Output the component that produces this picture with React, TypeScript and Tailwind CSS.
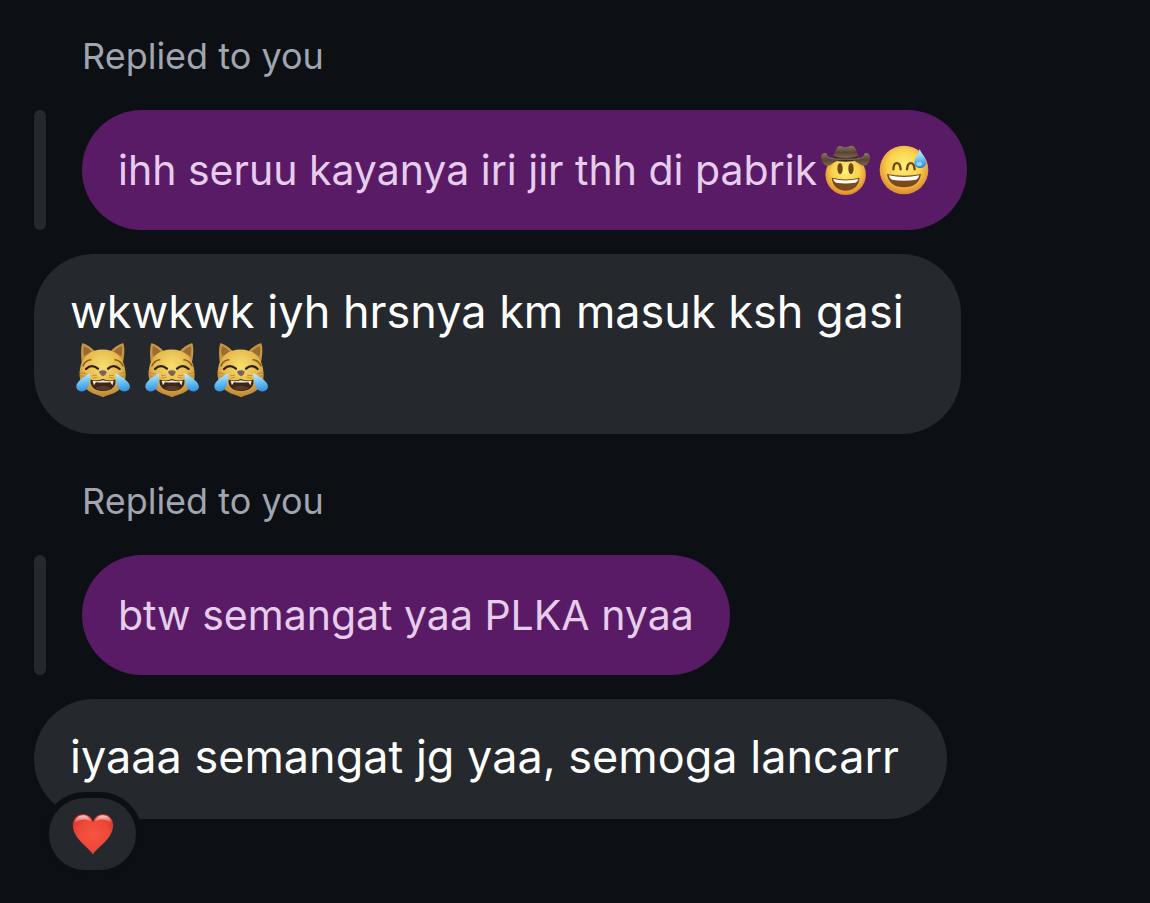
import React from 'react';

const CatJoyEmoji: React.FC = () => (
  <svg role="img" aria-label="cat with tears of joy" viewBox="0 0 166 170" className="h-[56px] w-[55px]">
    <defs>
      <radialGradient id="cat-face" cx="50%" cy="35%" r="65%">
        <stop offset="0" stopColor="#f8de70" />
        <stop offset="0.6" stopColor="#e6b94d" />
        <stop offset="1" stopColor="#b98034" />
      </radialGradient>
      <linearGradient id="cat-tear" x1="0.4" y1="0" x2="0.5" y2="1">
        <stop offset="0" stopColor="#c9efff" />
        <stop offset="0.5" stopColor="#6cc1f5" />
        <stop offset="1" stopColor="#2f8fe0" />
      </linearGradient>
    </defs>
    <path d="M17 62 C14 38 14 16 19 3 C34 8 48 18 58 30 Z" fill="#c8963f" />
    <path d="M142 62 C147 38 148 16 143 3 C127 8 113 18 103 30 Z" fill="#c8963f" />
    <path d="M24 44 C21 30 21 20 24 12 C34 17 41 22 47 29 Z" fill="#9c6a33" />
    <path d="M137 44 C140 30 141 20 138 12 C128 17 120 22 114 29 Z" fill="#9c6a33" />
    <path d="M80 23 C117 23 143 45 148 80 C153 108 150 133 126 149 C109 160 96 161 82 168 C67 161 54 160 38 149 C14 133 7 108 12 80 C18 44 44 23 80 23 Z" fill="url(#cat-face)" />
    <g fill="none" strokeLinecap="round">
      <path d="M21 72 Q28 56 44 54" stroke="#8a5a25" strokeWidth="5" />
      <path d="M142 72 Q134 56 118 54" stroke="#8a5a25" strokeWidth="5" />
      <path d="M30 82 Q47 65 66 81" stroke="#2b2019" strokeWidth="7" />
      <path d="M97 81 Q114 65 132 82" stroke="#2b2019" strokeWidth="7" />
      <path d="M9 92 L31 97 M10 103 L30 104 M150 92 L131 97 M150 103 L132 104 M50 102 L62 101 M51 110 L63 107 M101 101 L113 102 M100 107 L113 110" stroke="#a97431" strokeWidth="2" />
    </g>
    <path d="M70 89 Q81 82 92 89 Q94 98 82 104 Q69 98 70 89 Z" fill="#7c6258" />
    <path d="M44 114 Q61 120 81 112 Q101 120 119 114 C122 133 111 149 82 149 C52 149 41 132 44 114 Z" fill="#3a261b" />
    <path d="M50 118 Q66 121 81 116 Q98 121 114 118 L110 131 L104 122 Q82 124 60 122 L54 131 Z" fill="#f5eed8" />
    <path d="M58 140 Q81 125 106 140 Q98 147 82 147 Q66 147 58 140 Z" fill="#57382a" />
    <path d="M43 94 C42 111 41 131 32 143 C24 154 5 153 1 139 C-3 122 19 109 43 94 Z" fill="url(#cat-tear)" />
    <path d="M119 94 C120 111 121 131 131 143 C139 154 158 153 163 139 C166 122 143 109 119 94 Z" fill="url(#cat-tear)" />
  </svg>
);

const CowboyEmoji: React.FC = () => (
  <svg role="img" aria-label="cowboy" viewBox="0 0 150 154" className="h-[51px] w-[50px]">
    <defs>
      <radialGradient id="cowboy-face" cx="50%" cy="42%" r="58%">
        <stop offset="0" stopColor="#fff07a" />
        <stop offset="0.6" stopColor="#f8cf4a" />
        <stop offset="1" stopColor="#dd8630" />
      </radialGradient>
      <linearGradient id="cowboy-hat" x1="0" y1="0" x2="0" y2="1">
        <stop offset="0" stopColor="#8a7461" />
        <stop offset="0.55" stopColor="#594535" />
        <stop offset="1" stopColor="#80684f" />
      </linearGradient>
    </defs>
    <circle cx="74" cy="90" r="61" fill="url(#cowboy-face)" />
    <ellipse cx="57" cy="71" rx="8" ry="17" fill="#714615" />
    <ellipse cx="90" cy="71" rx="8" ry="17" fill="#714615" />
    <path d="M32 99 Q74 109 116 99 C114 125 97 138 74 138 C51 138 34 125 32 99 Z" fill="#7c4919" />
    <path d="M36 103 Q74 112 112 103 C110 110 107 113 103 114 Q74 119 45 114 Q38 112 36 103 Z" fill="#fff" />
    <path d="M35 39 C42 20 47 4 55 3 C63 2 67 8 74 7 C81 8 86 1 95 3 C105 6 108 23 114 39 Z" fill="url(#cowboy-hat)" />
    <path d="M38 33 Q74 45 111 33 L114 46 Q74 55 34 46 Z" fill="#3c2c24" />
    <path d="M15 25 C5 21 -3 31 1 44 C5 60 18 68 31 59 C46 47 57 44 74 44 C92 44 103 48 118 59 C131 68 144 59 147 44 C150 31 142 21 132 25 C134 43 111 43 74 43 C36 43 14 42 15 25 Z" fill="url(#cowboy-hat)" />
    <path d="M15 25 C15 42 40 43 74 43 C109 43 132 42 132 25" fill="none" stroke="#a18c75" strokeWidth="2" />
  </svg>
);

const SweatSmileEmoji: React.FC = () => (
  <svg role="img" aria-label="grinning with sweat" viewBox="0 0 150 150" className="h-[50px] w-[50px]">
    <defs>
      <radialGradient id="sweat-face" cx="50%" cy="42%" r="58%">
        <stop offset="0" stopColor="#fff07a" />
        <stop offset="0.6" stopColor="#f8cf4a" />
        <stop offset="1" stopColor="#dd8630" />
      </radialGradient>
      <linearGradient id="sweat-drop" x1="0.4" y1="0" x2="0.5" y2="1">
        <stop offset="0" stopColor="#d7f4ff" />
        <stop offset="0.55" stopColor="#6cc1f5" />
        <stop offset="1" stopColor="#2384cf" />
      </linearGradient>
    </defs>
    <circle cx="75" cy="75" r="73" fill="url(#sweat-face)" />
    <path d="M43 73 C44 48 63 48 65 73 M84 73 C86 48 105 48 107 73" fill="none" stroke="#714615" strokeWidth="7" strokeLinecap="round" />
    <path d="M24 87 Q75 98 126 87 C123 113 103 127 75 127 C47 127 27 113 24 87 Z" fill="#7c4919" />
    <path d="M29 91 Q75 101 121 91 C119 99 115 103 111 104 Q75 110 39 104 Q31 100 29 91 Z" fill="#fff" />
    <path d="M122 12 C128 28 142 39 141 53 C140 64 133 69 123 69 C112 69 105 62 106 51 C107 38 119 28 122 12 Z" fill="url(#sweat-drop)" />
    <ellipse cx="121" cy="57" rx="9" ry="6" fill="#b9e8fc" opacity="0.7" />
  </svg>
);

const HeartEmoji: React.FC = () => (
  <svg role="img" aria-label="red heart" viewBox="0 0 126 124" className="h-[41px] w-[42px]">
    <defs>
      <radialGradient id="heart-fill" cx="50%" cy="50%" r="60%">
        <stop offset="0" stopColor="#f75543" />
        <stop offset="0.65" stopColor="#ee4837" />
        <stop offset="1" stopColor="#d43228" />
      </radialGradient>
      <linearGradient id="heart-shine" x1="0" y1="0" x2="0" y2="1">
        <stop offset="0" stopColor="#fff" stopOpacity="0.75" />
        <stop offset="1" stopColor="#fff" stopOpacity="0" />
      </linearGradient>
    </defs>
    <path d="M63 123 C54 103 2 76 2 34 C2 15 15 1 33 1 C48 1 58 10 63 25 C68 10 78 1 93 1 C111 1 124 15 124 34 C124 76 72 103 63 123 Z" fill="url(#heart-fill)" />
    <path d="M7 29 C8 13 19 4 33 4 C45 4 54 12 57 23 C45 13 24 14 7 29 Z" fill="url(#heart-shine)" />
    <path d="M119 29 C118 13 107 4 93 4 C81 4 72 12 69 23 C81 13 102 14 119 29 Z" fill="url(#heart-shine)" />
  </svg>
);

interface ReplyProps {
  quoted: string;
  quotedEmoji?: React.ReactNode;
  children: React.ReactNode;
}

const Reply: React.FC<ReplyProps> = ({ quoted, quotedEmoji, children }) => (
  <article>
    <p className="pl-12 text-[36px] leading-[44px] text-[#a0a5b0]">Replied to you</p>
    <div className="mt-8 flex gap-9">
      <div className="w-3 shrink-0 rounded-full bg-[#25282d]" />
      <blockquote className="flex items-center rounded-[60px] bg-[#5a1b66] px-9 py-[30px] text-[41px] leading-[60px] text-[#e5cdeb]">
        <p>{quoted}</p>
        {quotedEmoji}
      </blockquote>
    </div>
    <div className="mt-6">{children}</div>
  </article>
);

const App: React.FC = () => {
  return (
    <main className="min-h-screen bg-[#0c0f14] px-[34px] pt-[34px] pb-8 font-['Inter',sans-serif]">
      <div className="flex flex-col gap-[45px]">
        <Reply
          quoted="ihh seruu kayanya iri jir thh di pabrik"
          quotedEmoji={
            <span className="flex items-center gap-2 pr-[2px] pl-1">
              <CowboyEmoji />
              <SweatSmileEmoji />
            </span>
          }
        >
          <div className="w-full max-w-[927px] rounded-[60px] bg-[#25282d] py-7 pr-12 pl-9 text-[45px] leading-[60px] text-white">
            <p>wkwkwk iyh hrsnya km masuk ksh gasi</p>
            <div className="flex h-16 gap-[14px] pl-[6px]">
              <CatJoyEmoji />
              <CatJoyEmoji />
              <CatJoyEmoji />
            </div>
          </div>
        </Reply>

        <Reply quoted="btw semangat yaa PLKA nyaa">
          <div className="relative w-fit rounded-[60px] bg-[#25282d] pt-7 pr-12 pb-8 pl-9 text-[45px] leading-[60px] text-white">
            <p>iyaaa semangat jg yaa, semoga lancarr</p>
            <button
              type="button"
              className="absolute top-[93px] left-[9px] flex h-[84px] w-[99px] items-center justify-center rounded-full border-[6px] border-[#0c0f14] bg-[#25282d]"
            >
              <HeartEmoji />
            </button>
          </div>
        </Reply>
      </div>
    </main>
  );
};

export default App;
